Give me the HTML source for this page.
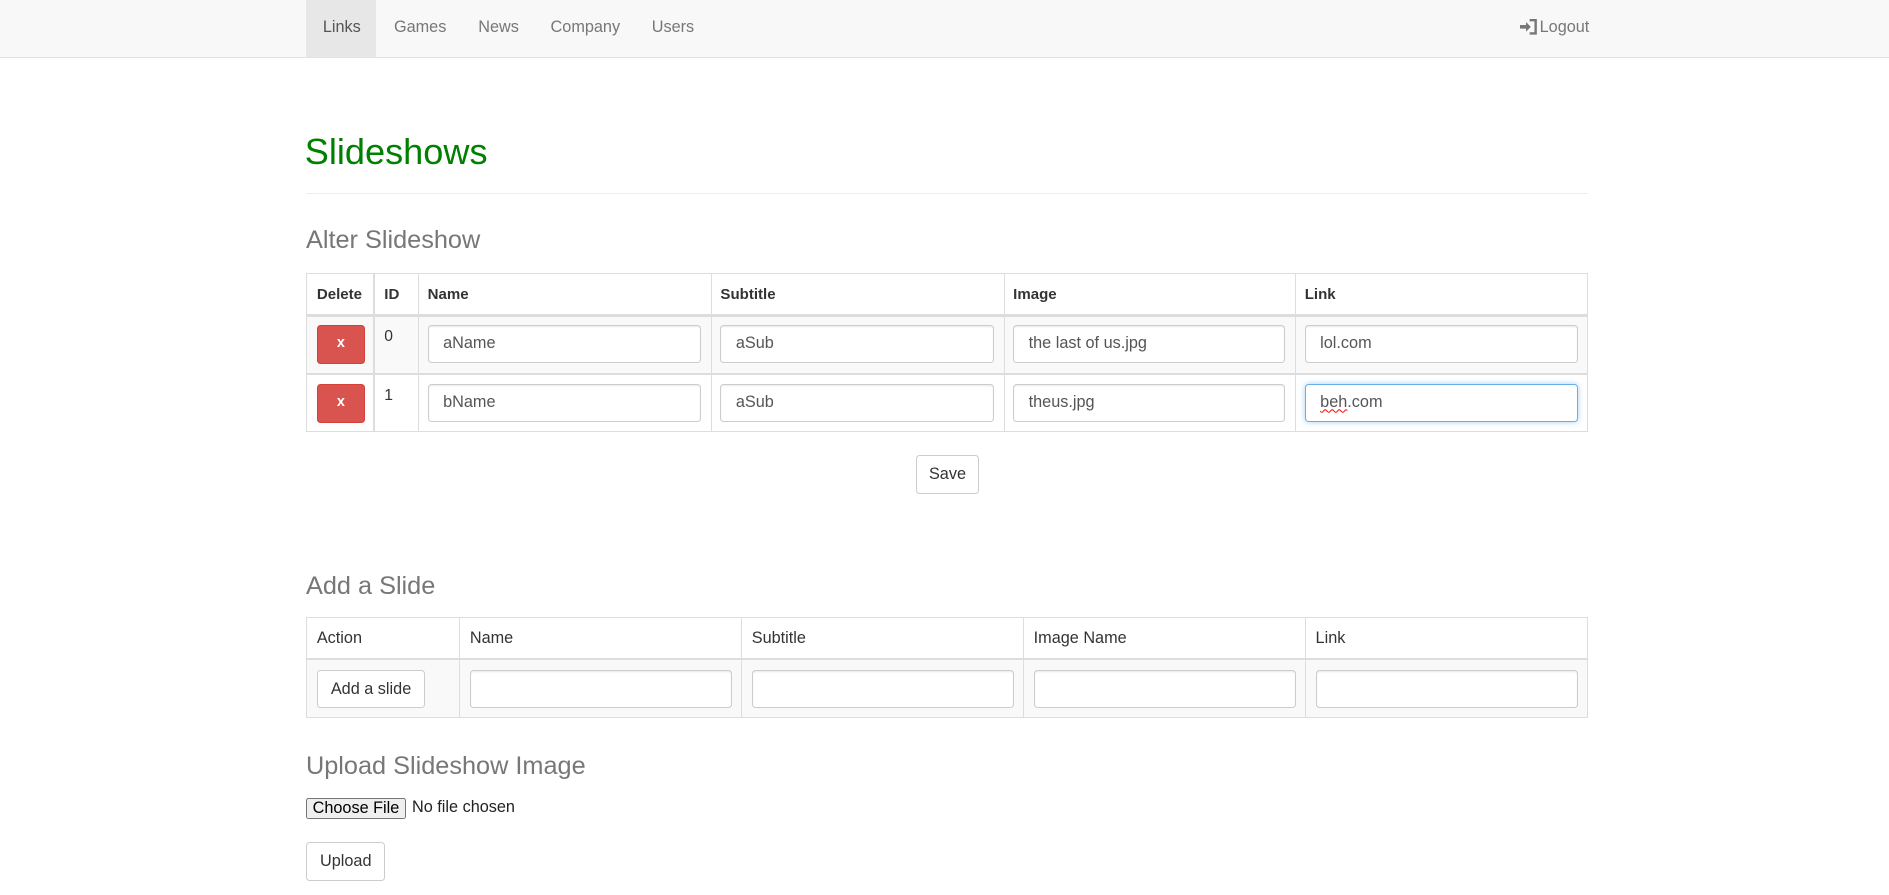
<!DOCTYPE html>
<html><head><meta charset="utf-8"><style>
html{zoom:1.20472}
body{margin:0;width:1568px;height:743px;overflow:hidden;background:#fff;font-family:"Liberation Sans",Arial,sans-serif;font-size:13px;color:#333;position:relative}
.a{position:absolute}
.nav{left:0;top:0;width:1568px;height:47px;background:#f8f8f8;border-bottom:1px solid #e2e2e2}
.ni{top:0;height:47px;line-height:45px;color:#777;font-size:13.5px}
h1,h3{margin:0;font-weight:normal;position:absolute}
.h3{color:#777;font-size:21px}
.bd{border:1px solid #ddd;box-sizing:border-box}
.inp{position:absolute;border:1px solid #ccc;border-radius:3px;background:#fff;box-sizing:border-box;height:31px;line-height:29px;padding-left:12px;color:#555;font-size:13.5px;box-shadow:inset 0 1px 1px rgba(0,0,0,.075)}
.btn{position:absolute;border:1px solid #ccc;border-radius:3px;background:#fff;box-sizing:border-box;text-align:center;color:#333;font-size:13.5px}
.red{position:absolute;background:#d9534f;border:1px solid #d43f3a;border-radius:3px;box-sizing:border-box;color:#fff;text-align:center;font-weight:bold;font-size:12px;line-height:29px}
.vl{position:absolute;width:1px;background:#ddd}
.hl{position:absolute;height:1px;background:#ddd}
.th{position:absolute;font-weight:bold;font-size:12.5px;color:#333}
.td{position:absolute;font-size:13px;color:#333}
</style></head><body>
<div class="a nav"></div>
<div class="a" style="left:254px;top:0;width:58px;height:47px;background:#e7e7e7"></div>
<div class="a ni" style="left:268px;color:#555">Links</div>
<div class="a ni" style="left:327px">Games</div>
<div class="a ni" style="left:397px">News</div>
<div class="a ni" style="left:457px">Company</div>
<div class="a ni" style="left:541px">Users</div>
<svg class="a" style="left:1262px;top:16px" width="15" height="13" viewBox="0 0 15 13"><path d="M0 5h5V2.5l4 4-4 4V8H0z" fill="#777"/><path d="M8 1h5v11H8" fill="none" stroke="#777" stroke-width="2"/></svg>
<div class="a ni" style="left:1278px">Logout</div>

<h1 style="left:253px;top:109px;font-size:30px;color:#008000">Slideshows</h1>
<div class="hl" style="left:254px;top:160px;width:1064px;background:#eee"></div>
<h3 class="h3" style="left:254px;top:188px">Alter Slideshow</h3>

<div class="a" style="left:254px;top:262px;width:1064px;height:48px;background:#f9f9f9"></div>
<div class="a bd" style="left:254px;top:227px;width:1064px;height:132px"></div>
<div class="hl" style="left:254px;top:261px;width:1064px;height:2px"></div>
<div class="hl" style="left:254px;top:310px;width:1064px"></div>
<div class="vl" style="left:310px;top:227px;height:132px"></div>
<div class="vl" style="left:347px;top:227px;height:132px"></div>
<div class="vl" style="left:590px;top:227px;height:132px"></div>
<div class="vl" style="left:833px;top:227px;height:132px"></div>
<div class="vl" style="left:1075px;top:227px;height:132px"></div>
<div class="th" style="left:263px;top:237px">Delete</div>
<div class="th" style="left:319px;top:237px">ID</div>
<div class="th" style="left:355px;top:237px">Name</div>
<div class="th" style="left:598px;top:237px">Subtitle</div>
<div class="th" style="left:841px;top:237px">Image</div>
<div class="th" style="left:1083px;top:237px">Link</div>
<div class="red" style="left:263px;top:270px;width:40px;height:32px">x</div>
<div class="red" style="left:263px;top:319px;width:40px;height:32px">x</div>
<div class="td" style="left:319px;top:272px">0</div>
<div class="td" style="left:319px;top:321px">1</div>
<div class="inp" style="left:355px;top:270px;width:227px">aName</div>
<div class="inp" style="left:598px;top:270px;width:227px">aSub</div>
<div class="inp" style="left:841px;top:270px;width:226px">the last of us.jpg</div>
<div class="inp" style="left:1083px;top:270px;width:227px">lol.com</div>
<div class="inp" style="left:355px;top:319px;width:227px">bName</div>
<div class="inp" style="left:598px;top:319px;width:227px">aSub</div>
<div class="inp" style="left:841px;top:319px;width:226px">theus.jpg</div>
<div class="inp" style="left:1083px;top:319px;width:227px;border-color:#66afe9;box-shadow:0 0 5px rgba(102,175,233,.6)"><span style="text-decoration:underline wavy red;text-decoration-thickness:1px">beh</span>.com</div>
<div class="btn" style="left:760px;top:378px;width:53px;height:32px;line-height:30px">Save</div>

<h3 class="h3" style="left:254px;top:475px">Add a Slide</h3>
<div class="a" style="left:254px;top:547px;width:1064px;height:49px;background:#f9f9f9"></div>
<div class="a bd" style="left:254px;top:512px;width:1064px;height:84px"></div>
<div class="hl" style="left:254px;top:546px;width:1064px;height:2px"></div>
<div class="vl" style="left:381px;top:512px;height:84px"></div>
<div class="vl" style="left:615px;top:512px;height:84px"></div>
<div class="vl" style="left:849px;top:512px;height:84px"></div>
<div class="vl" style="left:1083px;top:512px;height:84px"></div>
<div class="td" style="left:263px;top:522px;font-size:13.5px">Action</div>
<div class="td" style="left:390px;top:522px;font-size:13.5px">Name</div>
<div class="td" style="left:624px;top:522px;font-size:13.5px">Subtitle</div>
<div class="td" style="left:858px;top:522px;font-size:13.5px">Image Name</div>
<div class="td" style="left:1092px;top:522px;font-size:13.5px">Link</div>
<div class="btn" style="left:263px;top:556px;width:90px;height:32px;line-height:30px">Add a slide</div>
<div class="inp" style="left:390px;top:556px;width:218px;height:32px"></div>
<div class="inp" style="left:624px;top:556px;width:218px;height:32px"></div>
<div class="inp" style="left:858px;top:556px;width:218px;height:32px"></div>
<div class="inp" style="left:1092px;top:556px;width:218px;height:32px"></div>

<h3 class="h3" style="left:254px;top:624px">Upload Slideshow Image</h3>
<div class="a" style="left:254px;top:662px;width:83px;height:18px;box-sizing:border-box;border:1px solid #767676;border-radius:2px;background:#efefef;font-size:13.5px;line-height:16px;text-align:center;color:#000">Choose File</div>
<div class="a" style="left:342px;top:662px;font-size:13.5px;color:#222">No file chosen</div>
<div class="btn" style="left:254px;top:699px;width:66px;height:32px;line-height:30px">Upload</div>
</body></html>
